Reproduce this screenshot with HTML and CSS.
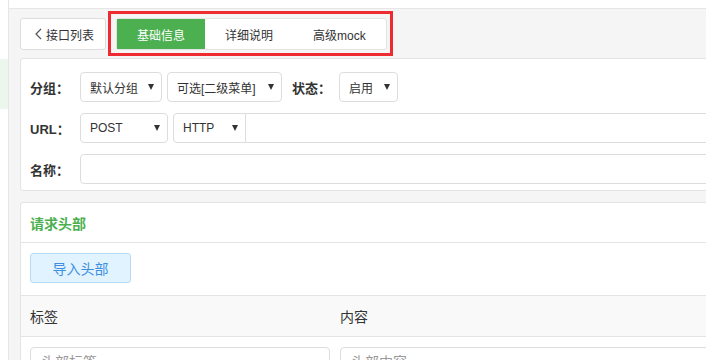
FILE: index.html
```html
<!DOCTYPE html>
<html lang="zh-CN">
<head>
    <meta charset="UTF-8">
    <meta name="viewport" content="width=device-width, initial-scale=1.0">
    <title>编辑接口</title>
    <link rel="stylesheet" href="styles.css">
</head>
<body>
    <div class="layout">
        <aside class="side">
            <div class="side-active"></div>
        </aside>

        <div class="main">
            <div class="toolbar">
                <button class="back-btn">
                    <svg width="7" height="12" viewBox="0 0 7 12"><polyline points="6,1 1,6 6,11" fill="none" stroke="#555" stroke-width="1.2"/></svg>
                    接口列表
                </button>
                <div class="tabs">
                    <span class="tab active">基础信息</span>
                    <span class="tab">详细说明</span>
                    <span class="tab">高级mock</span>
                    <div class="mark"></div>
                </div>
            </div>

            <div class="card form-card">
                <div class="form-row">
                    <span class="label">分组：</span>
                    <div class="select w-group">默认分组<i class="caret"></i></div>
                    <div class="select w-sub">可选[二级菜单]<i class="caret"></i></div>
                    <span class="label label-status">状态：</span>
                    <div class="select w-status">启用<i class="caret"></i></div>
                </div>
                <div class="form-row">
                    <span class="label">URL：</span>
                    <div class="select w-method">POST<i class="caret"></i></div>
                    <div class="input-group">
                        <div class="select w-proto">HTTP<i class="caret"></i></div>
                        <input class="input" type="text">
                    </div>
                </div>
                <div class="form-row">
                    <span class="label">名称：</span>
                    <input class="input" type="text">
                </div>
            </div>

            <div class="card header-card">
                <div class="card-head">请求头部</div>
                <div class="card-body">
                    <button class="import-btn">导入头部</button>
                </div>
                <div class="table-head">
                    <span>标签</span>
                    <span>内容</span>
                </div>
                <div class="table-row">
                    <input class="input" type="text" placeholder="头部标签">
                    <input class="input" type="text" placeholder="头部内容">
                </div>
            </div>
        </div>
    </div>
</body>
</html>
```

FILE: styles.css
```css
body {
    margin: 0;
    overflow: hidden;
    background: #fff;
    font-family: "Liberation Sans", "Noto Sans CJK SC", sans-serif;
    font-size: 12px;
    color: #333;
}
.layout {
    display: flex;
    height: 360px;
}
.side {
    width: 8px;
    flex: none;
    border-right: 1px solid #e6e6e6;
    padding-top: 59px;
}
.side-active {
    height: 50px;
    background-color: #ebf6ec;
}
.main {
    width: 900px;
    flex: none;
    margin-top: 8px;
    border-top: 1px solid #e6e6e6;
    background-color: #f5f5f5;
    padding: 9px 0 0 11px;
}
.toolbar {
    display: flex;
    align-items: center;
    gap: 10px;
}
.back-btn {
    box-sizing: border-box;
    width: 86px;
    height: 32px;
    display: flex;
    align-items: center;
    gap: 4px;
    padding: 0 0 0 14px;
    background: #fff;
    border: 1px solid #ddd;
    border-radius: 3px;
    font-family: inherit;
    font-size: 12px;
    color: #333;
}
.tabs {
    position: relative;
    display: flex;
    height: 32px;
    box-sizing: border-box;
    border: 1px solid #e2e2e2;
    border-radius: 3px;
    background: #fff;
}
.tab {
    display: flex;
    align-items: center;
    padding: 0 20px;
    color: #333;
}
.tab.active {
    background-color: #4caf50;
    color: #fff;
}
.mark {
    position: absolute;
    top: -8px;
    left: -9px;
    right: -7px;
    bottom: -7px;
    border: 3px solid #ee2b30;
}
.card {
    background: #fff;
    border: 1px solid #e4e4e4;
    border-radius: 3px;
    margin-top: 8px;
}
.header-card {
    margin-top: 11px;
}
.form-card {
    padding: 13px 0 6px 9px;
    display: flex;
    flex-direction: column;
    gap: 11px;
}
.form-row {
    display: flex;
    align-items: center;
    gap: 5px;
}
.label {
    width: 45px;
    flex: none;
    font-size: 13px;
    font-weight: bold;
    color: #333;
}
.label-status {
    width: 42px;
    margin-left: 5px;
}
.select {
    box-sizing: border-box;
    height: 30px;
    flex: none;
    display: flex;
    align-items: center;
    justify-content: space-between;
    padding: 0 7px 0 9px;
    border: 1px solid #ddd;
    border-radius: 4px;
    color: #333;
}
.caret {
    width: 0;
    height: 0;
    border-left: 3px solid transparent;
    border-right: 3px solid transparent;
    border-top: 6px solid #333;
    margin-top: -1px;
}
.w-group { width: 82px; }
.w-sub { width: 115px; }
.w-status { width: 59px; }
.w-method { width: 88px; }
.w-proto {
    width: 73px;
    border-radius: 4px 0 0 4px;
}
.input-group {
    flex: 1;
    display: flex;
}
.input-group .input {
    border-left: none;
    border-radius: 0 4px 4px 0;
}
.input {
    box-sizing: border-box;
    flex: 1;
    height: 30px;
    border: 1px solid #ddd;
    border-radius: 4px;
    padding: 0 10px;
    font-family: inherit;
    font-size: 14px;
    color: #333;
    outline: none;
}
.input::placeholder {
    color: #999;
}
.card-head {
    height: 39px;
    display: flex;
    align-items: center;
    padding-left: 9px;
    border-bottom: 1px solid #e4e4e4;
    font-size: 14px;
    font-weight: bold;
    color: #4caf50;
}
.card-body {
    padding: 10px 9px 12px;
    border-bottom: 1px solid #e4e4e4;
}
.import-btn {
    box-sizing: border-box;
    width: 101px;
    height: 30px;
    background-color: #e1f3fe;
    border: 1px solid #b5dcf4;
    border-radius: 3px;
    font-family: inherit;
    font-size: 14px;
    color: #3d8fe2;
}
.table-head {
    height: 40px;
    display: grid;
    grid-template-columns: 300px 1fr;
    gap: 10px;
    align-items: center;
    padding: 0 9px;
    background-color: #f9f9f9;
    border-bottom: 1px solid #e4e4e4;
    font-size: 14px;
    color: #333;
}
.table-row {
    display: grid;
    grid-template-columns: 300px 1fr;
    gap: 10px;
    padding: 10px 9px;
}
```
